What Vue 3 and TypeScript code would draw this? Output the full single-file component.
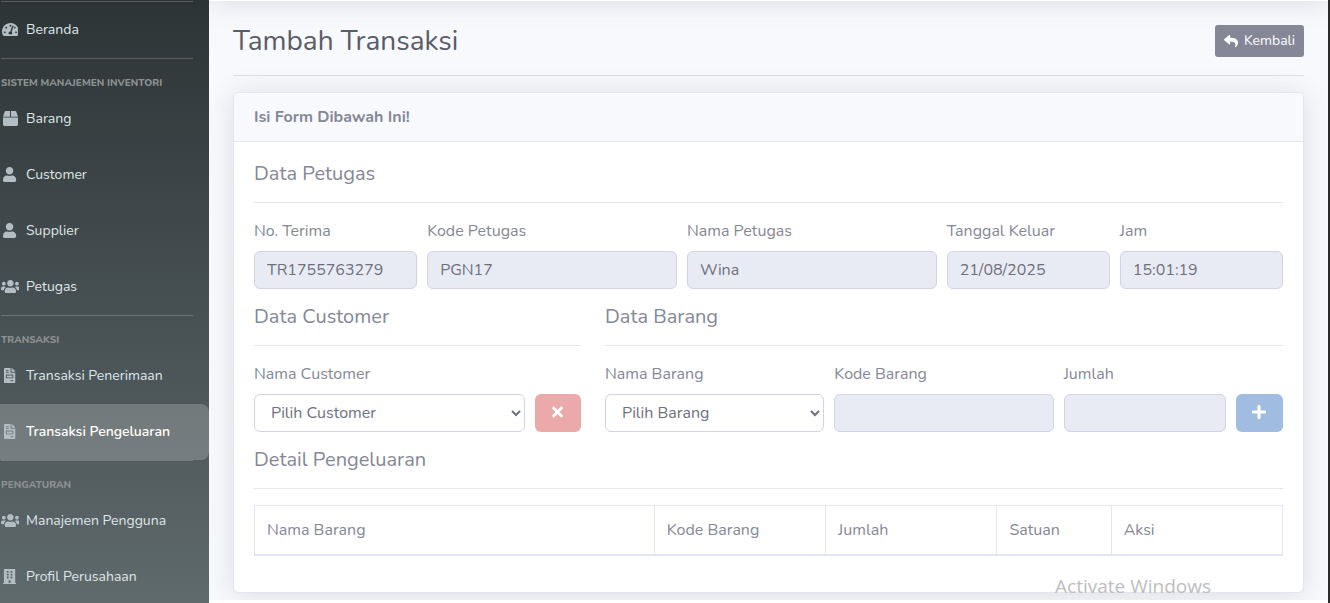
<script setup lang="ts">
import { ref } from 'vue'

interface Icon {
  w: number
  d: string
}

interface NavItem {
  label: string
  icon: string
  active?: boolean
}

interface NavGroup {
  heading?: string
  items: NavItem[]
}

const icons: Record<string, Icon> = {
  dashboard: {
    w: 576,
    d: 'M288 32C128.94 32 0 160.94 0 320c0 52.8 14.25 102.26 39.06 144.8 5.61 9.62 16.3 15.2 27.44 15.2h443c11.14 0 21.83-5.58 27.44-15.2C561.75 422.26 576 372.8 576 320c0-159.06-128.94-288-288-288zm0 64c14.71 0 26.58 10.13 30.32 23.65-1.11 2.26-2.64 4.23-3.45 6.67l-9.22 27.67c-5.13 3.49-10.97 6.01-17.64 6.01-17.67 0-32-14.33-32-32S270.33 96 288 96zM96 384c-17.67 0-32-14.33-32-32s14.33-32 32-32 32 14.33 32 32-14.33 32-32 32zm48-160c-17.67 0-32-14.33-32-32s14.33-32 32-32 32 14.33 32 32-14.33 32-32 32zm246.77-72.41l-61.33 184C343.13 347.33 352 364.54 352 384c0 11.72-3.38 22.55-8.88 32H232.88c-5.5-9.45-8.88-20.28-8.88-32 0-33.94 26.5-61.43 59.9-63.59l61.34-184.01c4.17-12.56 17.73-19.45 30.36-15.17 12.57 4.19 19.35 17.79 15.17 30.36zm14.66 57.2l15.52-46.55c3.47-1.29 7.13-2.23 11.05-2.23 17.67 0 32 14.33 32 32s-14.33 32-32 32c-11.38-.01-20.89-6.28-26.57-15.22zM480 384c-17.67 0-32-14.33-32-32s14.33-32 32-32 32 14.33 32 32-14.33 32-32 32z',
  },
  box: {
    w: 512,
    d: 'M509.5 184.6L458.9 32.8C452.4 13.2 434.1 0 413.4 0H272v192h238.7c-.4-2.5-.4-5-1.2-7.4zM240 0H98.6c-20.7 0-39 13.2-45.5 32.8L2.5 184.6c-.8 2.4-.8 4.9-1.2 7.4H240V0zM0 224v240c0 26.5 21.5 48 48 48h416c26.5 0 48-21.5 48-48V224H0z',
  },
  user: {
    w: 448,
    d: 'M224 256c70.7 0 128-57.3 128-128S294.7 0 224 0 96 57.3 96 128s57.3 128 128 128zm89.6 32h-16.7c-22.2 10.2-46.9 16-72.9 16s-50.6-5.8-72.9-16h-16.7C60.2 288 0 348.2 0 422.4V464c0 26.5 21.5 48 48 48h352c26.5 0 48-21.5 48-48v-41.6c0-74.2-60.2-134.4-134.4-134.4z',
  },
  users: {
    w: 640,
    d: 'M96 224c35.3 0 64-28.7 64-64s-28.7-64-64-64-64 28.7-64 64 28.7 64 64 64zm448 0c35.3 0 64-28.7 64-64s-28.7-64-64-64-64 28.7-64 64 28.7 64 64 64zm32 32h-64c-17.6 0-33.5 7.1-45.1 18.6 40.3 22.1 68.9 62 75.1 109.4h66c17.7 0 32-14.3 32-32v-32c0-35.3-28.7-64-64-64zm-256 0c61.9 0 112-50.1 112-112S381.9 32 320 32 208 82.1 208 144s50.1 112 112 112zm76.8 32h-8.3c-20.8 10-43.9 16-68.5 16s-47.6-6-68.5-16h-8.3C179.6 288 128 339.6 128 403.2V432c0 26.5 21.5 48 48 48h288c26.5 0 48-21.5 48-48v-28.8c0-63.6-51.6-115.2-115.2-115.2zm-223.7-13.4C161.5 263.1 145.6 256 128 256H64c-35.3 0-64 28.7-64 64v32c0 17.7 14.3 32 32 32h65.9c6.3-47.4 34.9-87.3 75.2-109.4z',
  },
  invoice: {
    w: 384,
    d: 'M288 256H96v64h192v-64zm89-151L279.1 7c-4.5-4.5-10.6-7-17-7H256v128h128v-6.1c0-6.3-2.5-12.4-7-16.9zm-153 31V0H24C10.7 0 0 10.7 0 24v464c0 13.3 10.7 24 24 24h336c13.3 0 24-10.7 24-24V160H248c-13.2 0-24-10.8-24-24zM64 72c0-4.42 3.58-8 8-8h80c4.42 0 8 3.58 8 8v16c0 4.42-3.58 8-8 8H72c-4.42 0-8-3.58-8-8V72zm0 64c0-4.42 3.58-8 8-8h80c4.42 0 8 3.58 8 8v16c0 4.42-3.58 8-8 8H72c-4.42 0-8-3.58-8-8v-16zm256 304c0 4.42-3.58 8-8 8h-80c-4.42 0-8-3.58-8-8v-16c0-4.42 3.58-8 8-8h80c4.42 0 8 3.58 8 8v16zm0-200v96c0 8.84-7.16 16-16 16H80c-8.84 0-16-7.16-16-16v-96c0-8.84 7.16-16 16-16h224c8.84 0 16 7.16 16 16z',
  },
  building: {
    w: 448,
    d: 'M436 480h-20V24c0-13.3-10.7-24-24-24H56C42.7 0 32 10.7 32 24v456H12c-6.6 0-12 5.4-12 12v20h448v-20c0-6.6-5.4-12-12-12zM128 64h64v64h-64zM256 64h64v64h-64zM128 160h64v64h-64zM256 160h64v64h-64zM128 256h64v64h-64zM256 256h64v64h-64zM192 384h64v96h-64z',
  },
  reply: {
    w: 512,
    d: 'M8.309 189.836L184.313 37.851C199.719 24.546 224 35.347 224 56.015v80.053c160.629 1.839 288 34.032 288 186.258 0 61.441-39.581 122.309-83.333 154.132-13.653 9.931-33.111-2.533-28.077-18.631 45.344-145.012-21.507-183.51-176.59-185.742V360c0 20.7-24.3 31.453-39.687 18.164l-176.004-152c-11.071-9.562-11.086-26.753 0-36.328z',
  },
  times: {
    w: 352,
    d: 'M242.72 256l100.07-100.07c12.28-12.28 12.28-32.19 0-44.48l-22.24-22.24c-12.28-12.28-32.19-12.28-44.48 0L176 189.28 75.93 89.21c-12.28-12.28-32.19-12.28-44.48 0L9.21 111.45c-12.28 12.28-12.28 32.19 0 44.48L109.28 256 9.21 356.07c-12.28 12.28-12.28 32.19 0 44.48l22.24 22.24c12.28 12.28 32.2 12.28 44.48 0L176 322.72l100.07 100.07c12.28 12.28 32.2 12.28 44.48 0l22.24-22.24c12.28-12.28 12.28-32.19 0-44.48L242.72 256z',
  },
  plus: {
    w: 448,
    d: 'M416 208H272V64c0-17.67-14.33-32-32-32h-32c-17.67 0-32 14.33-32 32v144H32c-17.67 0-32 14.33-32 32v32c0 17.67 14.33 32 32 32h144v144c0 17.67 14.33 32 32 32h32c17.67 0 32-14.33 32-32V304h144c17.67 0 32-14.33 32-32v-32c0-17.67-14.33-32-32-32z',
  },
}

const groups: NavGroup[] = [
  { items: [{ label: 'Beranda', icon: 'dashboard' }] },
  {
    heading: 'Sistem Manajemen Inventori',
    items: [
      { label: 'Barang', icon: 'box' },
      { label: 'Customer', icon: 'user' },
      { label: 'Supplier', icon: 'user' },
      { label: 'Petugas', icon: 'users' },
    ],
  },
  {
    heading: 'Transaksi',
    items: [
      { label: 'Transaksi Penerimaan', icon: 'invoice' },
      { label: 'Transaksi Pengeluaran', icon: 'invoice', active: true },
    ],
  },
  {
    heading: 'Pengaturan',
    items: [
      { label: 'Manajemen Pengguna', icon: 'users' },
      { label: 'Profil Perusahaan', icon: 'building' },
    ],
  },
]

const petugas = [
  { id: 'no-terima', label: 'No. Terima', value: 'TR1755763279', size: 'span-2' },
  { id: 'kode-petugas', label: 'Kode Petugas', value: 'PGN17', size: 'span-3' },
  { id: 'nama-petugas', label: 'Nama Petugas', value: 'Wina', size: 'span-3' },
  { id: 'tanggal-keluar', label: 'Tanggal Keluar', value: '21/08/2025', size: 'span-2' },
  { id: 'jam', label: 'Jam', value: '15:01:19', size: 'span-2' },
]

const customer = ref('')
const barang = ref('')
const kodeBarang = ref('')
const jumlah = ref('')
</script>

<template>
  <div class="page">
    <nav class="sidebar" aria-label="Menu utama">
      <div v-for="(group, i) in groups" :key="i" class="nav-group">
        <h2 v-if="group.heading" class="nav-heading">{{ group.heading }}</h2>
        <a
          v-for="item in group.items"
          :key="item.label"
          href="#"
          class="nav-link"
          :class="{ active: item.active }"
        >
          <span class="nav-icon">
            <svg class="icon" :viewBox="`0 0 ${icons[item.icon].w} 512`" aria-hidden="true">
              <path fill-rule="evenodd" :d="icons[item.icon].d" />
            </svg>
          </span>
          <span>{{ item.label }}</span>
        </a>
      </div>
    </nav>

    <div class="content">
      <div class="topbar"></div>
      <main class="main">
        <header class="page-head">
          <h1>Tambah Transaksi</h1>
          <a href="#" class="back">
            <svg class="icon" viewBox="0 0 512 512" aria-hidden="true"><path :d="icons.reply.d" /></svg>
            <span>Kembali</span>
          </a>
        </header>

        <section class="card">
          <div class="card-head">Isi Form Dibawah Ini!</div>
          <form class="card-body" @submit.prevent>
            <h2 class="section-title">Data Petugas</h2>
            <div class="row">
              <div v-for="f in petugas" :key="f.id" :class="f.size">
                <label :for="f.id">{{ f.label }}</label>
                <input :id="f.id" class="control" type="text" :value="f.value" readonly />
              </div>
            </div>

            <div class="split">
              <div class="split-customer">
                <h2 class="section-title">Data Customer</h2>
                <div class="row">
                  <div class="span-10">
                    <label for="customer">Nama Customer</label>
                    <select id="customer" v-model="customer" class="control">
                      <option value="">Pilih Customer</option>
                    </select>
                  </div>
                  <button type="button" class="btn danger span-2" aria-label="Reset" disabled>
                    <svg class="icon" viewBox="0 0 352 512" aria-hidden="true"><path :d="icons.times.d" /></svg>
                  </button>
                </div>
              </div>
              <div class="split-barang">
                <h2 class="section-title">Data Barang</h2>
                <div class="row">
                  <div class="span-4">
                    <label for="barang">Nama Barang</label>
                    <select id="barang" v-model="barang" class="control">
                      <option value="">Pilih Barang</option>
                    </select>
                  </div>
                  <div class="span-4">
                    <label for="kode-barang">Kode Barang</label>
                    <input id="kode-barang" v-model="kodeBarang" class="control" type="text" readonly />
                  </div>
                  <div class="span-3">
                    <label for="jumlah">Jumlah</label>
                    <input id="jumlah" v-model="jumlah" class="control" type="text" readonly />
                  </div>
                  <button type="button" class="btn primary span-1" aria-label="Tambah" disabled>
                    <svg class="icon" viewBox="0 0 448 512" aria-hidden="true"><path :d="icons.plus.d" /></svg>
                  </button>
                </div>
              </div>
            </div>

            <h2 class="section-title">Detail Pengeluaran</h2>
            <table class="detail">
              <colgroup>
                <col class="w-name" />
                <col class="w-mid" />
                <col class="w-mid" />
                <col class="w-unit" />
                <col class="w-mid" />
              </colgroup>
              <thead>
                <tr>
                  <th scope="col">Nama Barang</th>
                  <th scope="col">Kode Barang</th>
                  <th scope="col">Jumlah</th>
                  <th scope="col">Satuan</th>
                  <th scope="col">Aksi</th>
                </tr>
              </thead>
            </table>
          </form>
        </section>
      </main>
      <footer class="footer"></footer>
    </div>
    <div class="watermark">Activate Windows</div>
  </div>
</template>

<style>
body {
  margin: 0;
}
</style>

<style scoped>
*,
*::before,
*::after {
  box-sizing: border-box;
}

.page {
  position: relative;
  display: flex;
  height: 100vh;
  overflow: hidden;
  border-right: 2px solid #2b2b2b;
  background: #f8f9fc;
  color: #858796;
  font-family: 'Nunito', 'Lato', sans-serif;
  font-size: 16px;
  line-height: 24px;
}

.icon {
  display: block;
  flex: none;
  height: 1em;
  fill: currentColor;
}

.sidebar {
  position: relative;
  z-index: 1;
  flex: none;
  width: 209px;
  padding-top: 1px;
  background: linear-gradient(180deg, #2d3436, #5f6a6d);
  font-size: 14px;
}

.nav-group::before {
  content: '';
  display: block;
  height: 1px;
  margin: 0 16px 0 1px;
  background: rgba(255, 255, 255, 0.2);
}

.nav-heading {
  height: 32px;
  margin: 0;
  padding: 16px 0 0 1px;
  color: #8d9192;
  font-size: 10px;
  font-weight: 800;
  line-height: 16px;
  text-transform: uppercase;
  white-space: nowrap;
}

.nav-link {
  display: flex;
  align-items: center;
  gap: 7px;
  height: 56px;
  padding-left: 1px;
  color: #dfe6e9;
  text-decoration: none;
  white-space: nowrap;
}

.nav-icon {
  display: flex;
  flex: none;
  justify-content: center;
  width: 18px;
  padding-bottom: 2px;
  color: #b2bec3;
  font-size: 15px;
}

.nav-link.active {
  border-radius: 0 8px 8px 0;
  background: rgba(255, 255, 255, 0.2);
  color: #fff;
  font-weight: 600;
}

.content {
  display: flex;
  flex: 1;
  flex-direction: column;
  min-width: 0;
}

/* The bar is scrolled out of view except for its lower edge and shadow. */
.topbar {
  flex: none;
  height: 70px;
  margin-top: -69px;
  background: #fff;
  box-shadow: 0 2px 28px rgba(58, 59, 69, 0.15);
}

.main {
  padding: 23px 24px 7px;
}

.page-head {
  display: flex;
  align-items: center;
  justify-content: space-between;
  margin-bottom: 16px;
  padding-bottom: 17px;
  border-bottom: 1px solid #dddfe3;
}

h1 {
  margin: 0;
  color: #5a5c69;
  font-size: 28px;
  font-weight: 400;
  line-height: 34px;
}

.back {
  display: flex;
  align-items: center;
  gap: 6px;
  height: 32px;
  padding: 0 9px;
  border-radius: 3px;
  background: #858796;
  color: #fff;
  font-size: 14px;
  text-decoration: none;
}

.card {
  border: 1px solid #e3e6f0;
  border-radius: 6px;
  background: #fff;
  box-shadow: 0 2px 28px rgba(58, 59, 69, 0.15);
}

.card-head {
  padding: 12px 20px;
  border-bottom: 1px solid #e3e6f0;
  border-radius: 5px 5px 0 0;
  background: #f8f9fc;
  font-weight: 700;
}

.card-body {
  padding: 20px 20px 36px;
}

.section-title {
  margin: 0 0 16px;
  padding-bottom: 16px;
  border-bottom: 1px solid #e6e6e8;
  font-size: 20px;
  font-weight: 400;
  line-height: 24px;
}

.row {
  display: grid;
  grid-template-columns: repeat(12, minmax(0, 1fr));
  gap: 10px;
  align-items: end;
  margin-bottom: 16px;
}

.span-1 { grid-column: span 1; }
.span-2 { grid-column: span 2; }
.span-3 { grid-column: span 3; }
.span-4 { grid-column: span 4; }
.span-10 { grid-column: span 10; }

.split {
  display: grid;
  grid-template-columns: repeat(12, minmax(0, 1fr));
  column-gap: 24px;
}

.split-customer { grid-column: span 4; }
.split-barang { grid-column: span 8; }

label {
  display: block;
  margin-bottom: 8px;
}

.control {
  display: block;
  width: 100%;
  height: 38px;
  margin: 0;
  padding: 6px 12px;
  border: 1px solid #d1d3e2;
  border-radius: 6px;
  outline: 0;
  background: #fff;
  color: #6e707e;
  font: inherit;
}

input.control {
  background: #e8ebf3;
}

.btn {
  display: flex;
  align-items: center;
  justify-content: center;
  height: 38px;
  padding: 0 0 2px;
  border: 0;
  border-radius: 6px;
  color: #fff;
  font: inherit;
}

.danger { background: #eba9a9; }
.primary { background: #a0bce0; }

.detail {
  width: 100%;
  border-collapse: collapse;
  table-layout: fixed;
}

.w-name { width: calc(100% * 7 / 18); }
.w-mid { width: calc(100% * 3 / 18); }
.w-unit { width: calc(100% * 2 / 18); }

.detail th {
  height: 49px;
  padding: 0 12px;
  border: 1px solid #e3e6f0;
  border-bottom-width: 2px;
  font-weight: 400;
  text-align: left;
}

.footer {
  flex: 1;
  min-height: 3px;
  background: #fff;
}

.watermark {
  position: absolute;
  right: 117px;
  bottom: 4px;
  color: #bdbdbf;
  font-family: 'Open Sans', sans-serif;
  font-size: 19px;
  line-height: 26px;
  pointer-events: none;
}
</style>
